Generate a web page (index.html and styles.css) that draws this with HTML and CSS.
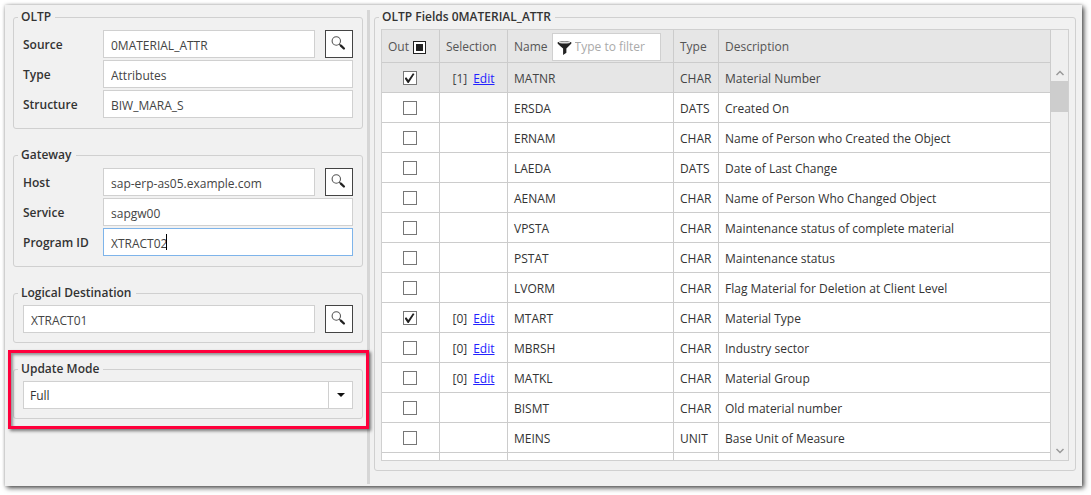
FILE: index.html
```
<!DOCTYPE html>
<html lang="en">
<head>
<meta charset="utf-8">
<title>OLTP Extraction</title>
<link rel="stylesheet" href="styles.css">
</head>
<body>
<svg class="sprite" aria-hidden="true">
  <symbol id="search" viewBox="0 0 16 16">
    <circle cx="5.3" cy="5" r="4.2" fill="none" stroke="#555" stroke-width="1.1"/>
    <path d="M8.300 8.100l2 2" stroke="#444" stroke-width="1.3"/>
    <path d="M9.900 9.600l3 2.900" stroke="#222" stroke-width="2.3" stroke-linecap="round"/>
  </symbol>
</svg>
<main class="window">
  <form class="settings">
    <fieldset class="group">
      <legend>OLTP</legend>
      <div class="field">
        <label for="source">Source</label>
        <input class="text" id="source" type="text" value="0MATERIAL_ATTR">
        <button class="lookup" type="button" aria-label="Find source"><svg><use href="#search"/></svg></button>
      </div>
      <div class="field">
        <label for="type">Type</label>
        <input class="text" id="type" type="text" value="Attributes">
      </div>
      <div class="field">
        <label for="structure">Structure</label>
        <input class="text" id="structure" type="text" value="BIW_MARA_S">
      </div>
    </fieldset>
    <fieldset class="group">
      <legend>Gateway</legend>
      <div class="field">
        <label for="host">Host</label>
        <input class="text" id="host" type="text" value="sap-erp-as05.example.com">
        <button class="lookup" type="button" aria-label="Find host"><svg><use href="#search"/></svg></button>
      </div>
      <div class="field">
        <label for="service">Service</label>
        <input class="text" id="service" type="text" value="sapgw00">
      </div>
      <div class="field">
        <label for="program">Program ID</label>
        <span class="editing">
          <input class="text active" id="program" type="text" value="XTRACT02">
          <span class="caret"></span>
        </span>
      </div>
    </fieldset>
    <fieldset class="group compact">
      <legend>Logical Destination</legend>
      <div class="field">
        <input class="text" type="text" value="XTRACT01" aria-label="Logical Destination">
        <button class="lookup" type="button" aria-label="Find destination"><svg><use href="#search"/></svg></button>
      </div>
    </fieldset>
    <div class="highlighted">
      <fieldset class="group compact">
        <legend>Update Mode</legend>
        <div class="dropdown">
          <select aria-label="Update Mode"><option>Full</option></select>
          <span class="arrow"></span>
        </div>
      </fieldset>
      <div class="highlight"></div>
    </div>
  </form>
  <div class="splitter"></div>
  <fieldset class="group fields">
    <legend>OLTP Fields 0MATERIAL_ATTR</legend>
    <div class="grid">
      <div class="viewport">
        <table>
          <colgroup><col class="c-out"><col class="c-sel"><col class="c-name"><col class="c-type"><col></colgroup>
          <thead>
            <tr>
              <th scope="col"><label class="head">Out <input class="mixed" type="checkbox"></label></th>
              <th scope="col">Selection</th>
              <th scope="col"><div class="head">Name
                <span class="filter">
                  <svg viewBox="0 0 16 16"><path d="M.5 3C.5.6 15.500.6 15.500 3c0 1-1.300 2-2.500 3L10 9v4.500L6.500 16V9L3 6C1.800 5 .5 4 .5 3z" fill="#222"/><ellipse cx="8" cy="2.700" rx="6" ry="1" fill="#ddd"/></svg>
                  <input type="text" placeholder="Type to filter" aria-label="Filter by name">
                </span></div></th>
              <th scope="col">Type</th>
              <th scope="col">Description</th>
            </tr>
          </thead>
          <tbody>
            <tr class="selected"><td class="out"><input type="checkbox" aria-label="MATNR" checked></td><td><div class="pick">[1] <a href="#">Edit</a></div></td><td>MATNR</td><td>CHAR</td><td>Material Number</td></tr>
            <tr><td class="out"><input type="checkbox" aria-label="ERSDA"></td><td></td><td>ERSDA</td><td>DATS</td><td>Created On</td></tr>
            <tr><td class="out"><input type="checkbox" aria-label="ERNAM"></td><td></td><td>ERNAM</td><td>CHAR</td><td>Name of Person who Created the Object</td></tr>
            <tr><td class="out"><input type="checkbox" aria-label="LAEDA"></td><td></td><td>LAEDA</td><td>DATS</td><td>Date of Last Change</td></tr>
            <tr><td class="out"><input type="checkbox" aria-label="AENAM"></td><td></td><td>AENAM</td><td>CHAR</td><td>Name of Person Who Changed Object</td></tr>
            <tr><td class="out"><input type="checkbox" aria-label="VPSTA"></td><td></td><td>VPSTA</td><td>CHAR</td><td>Maintenance status of complete material</td></tr>
            <tr><td class="out"><input type="checkbox" aria-label="PSTAT"></td><td></td><td>PSTAT</td><td>CHAR</td><td>Maintenance status</td></tr>
            <tr><td class="out"><input type="checkbox" aria-label="LVORM"></td><td></td><td>LVORM</td><td>CHAR</td><td>Flag Material for Deletion at Client Level</td></tr>
            <tr><td class="out"><input type="checkbox" aria-label="MTART" checked></td><td><div class="pick">[0] <a href="#">Edit</a></div></td><td>MTART</td><td>CHAR</td><td>Material Type</td></tr>
            <tr><td class="out"><input type="checkbox" aria-label="MBRSH"></td><td><div class="pick">[0] <a href="#">Edit</a></div></td><td>MBRSH</td><td>CHAR</td><td>Industry sector</td></tr>
            <tr><td class="out"><input type="checkbox" aria-label="MATKL"></td><td><div class="pick">[0] <a href="#">Edit</a></div></td><td>MATKL</td><td>CHAR</td><td>Material Group</td></tr>
            <tr><td class="out"><input type="checkbox" aria-label="BISMT"></td><td></td><td>BISMT</td><td>CHAR</td><td>Old material number</td></tr>
            <tr><td class="out"><input type="checkbox" aria-label="MEINS"></td><td></td><td>MEINS</td><td>UNIT</td><td>Base Unit of Measure</td></tr>
            <tr><td></td><td></td><td></td><td></td><td></td></tr>
          </tbody>
        </table>
      </div>
      <div class="scrollbar">
        <svg viewBox="0 0 10 6"><path d="M1.500 5L5 1.500 8.500 5"/></svg>
        <div class="thumb"></div>
        <svg class="down" viewBox="0 0 10 6"><path d="M1.500 1L5 4.500 8.500 1"/></svg>
      </div>
    </div>
  </fieldset>
</main>
</body>
</html>
```
FILE: styles.css
```
* { box-sizing: border-box; }

body {
  margin: 0;
  height: 100vh;
  padding: 5px 9px 9px 5px;
  background: #fff;
  color: #333;
  font: 12px/16px "Open Sans", "Noto Sans", sans-serif;
}

input, select, button { font: inherit; color: inherit; margin: 0; }

.sprite { position: absolute; width: 0; height: 0; }

.window {
  display: flex;
  height: 100%;
  padding: 4px 6px 2px 8px;
  background: #f1f1f1;
  box-shadow: 2px 2px 5px rgba(0, 0, 0, .7), 0 0 3px rgba(0, 0, 0, .2);
}

.settings {
  display: flex;
  flex: 0 0 350px;
  flex-direction: column;
  gap: 18px;
}

.group {
  min-width: 0;
  margin: 0;
  padding: 5px 9px 10px;
  border: 1px solid #d0d0d0;
  border-radius: 3px;
}

.compact { padding: 4px 9px 9px; }

legend {
  height: 16px;
  margin-left: -5px;
  padding: 0 4px 0 3px;
  font-weight: 600;
}

.field {
  display: flex;
  align-items: center;
  height: 28px;
}

.field + .field { margin-top: 2px; }

.field label { flex: 0 0 80px; padding-top: 2px; font-weight: 600; }

.text {
  flex: 1;
  width: 100%;
  min-width: 0;
  height: 28px;
  padding: 2px 7px 0;
  border: 1px solid #d0d0d0;
  background: #fff;
  color: #444;
  outline: none;
}

.active { border-color: #7eb4ea; }

.editing { position: relative; display: flex; flex: 1; }

.caret {
  position: absolute;
  top: 6px;
  left: 63px;
  width: 1px;
  height: 16px;
  background: #000;
}

.lookup {
  display: grid;
  place-items: center;
  width: 28px;
  height: 28px;
  margin-left: 10px;
  padding: 0;
  border: 1px solid #444;
  background: #fff;
}

.lookup svg { width: 16px; height: 16px; }

.highlighted { position: relative; }

.highlight {
  position: absolute;
  inset: -11px -6px -10px -5px;
  z-index: 1;
  border: 3px solid #ff003c;
  box-shadow: 2px 2px 3px rgba(0, 0, 0, .5), inset 2px 2px 3px rgba(0, 0, 0, .4);
  pointer-events: none;
}

.dropdown { display: grid; }

.dropdown select {
  grid-area: 1 / 1;
  height: 28px;
  padding: 2px 6px 0;
  border: 1px solid #d0d0d0;
  border-radius: 0;
  background: #fff;
  appearance: none;
}

.arrow {
  grid-area: 1 / 1;
  display: grid;
  place-items: center;
  justify-self: end;
  width: 25px;
  border-left: 1px solid #d0d0d0;
  pointer-events: none;
}

.arrow::before {
  content: "";
  border: 4px solid transparent;
  border-top-color: #111;
  border-bottom: 0;
}

.splitter { flex: 0 0 3px; margin: 1px 4px 0; background: #d6d6d6; }

.fields {
  flex: 1;
  margin-bottom: 13px;
  padding: 4px 6px 9px;
}

.fields legend { margin-left: -2px; }

.grid {
  display: flex;
  height: 100%;
  border: 1px solid #d0d0d0;
  background: #fff;
}

.viewport { flex: 1; min-width: 0; overflow: hidden; }

table {
  width: 100%;
  border-spacing: 0;
  table-layout: fixed;
}

.c-out { width: 58px; }
.c-sel { width: 68px; }
.c-name { width: 166px; }
.c-type { width: 45px; }

th, td {
  height: 30px;
  padding: 2px 6px 0;
  border-right: 1px solid #ccc;
  border-bottom: 1px solid #ccc;
  text-align: left;
  white-space: nowrap;
}

th {
  height: 33px;
  background: #e6e6e6;
  color: #555;
  font-weight: 400;
}

.selected td { background: #e6e6e6; color: #444; }

td.out { padding: 0 8px 0 6px; text-align: center; }

.head { display: flex; align-items: center; gap: 4px; }

.pick { display: flex; justify-content: center; gap: 6px; }

a { color: #22f; }

input[type="checkbox"] {
  display: inline-grid;
  place-items: center;
  width: 14px;
  height: 14px;
  border: 1px solid #777;
  background: #fff;
  appearance: none;
  vertical-align: middle;
}

input[type="checkbox"]:checked::before {
  content: "";
  width: 10px;
  height: 10px;
  background: #222;
  clip-path: polygon(0 50%, 18% 40%, 38% 66%, 84% 0, 100% 8%, 42% 98%, 32% 98%);
}

input.mixed { width: 13px; height: 13px; border-color: #222; }

.mixed::before {
  content: "";
  width: 7px;
  height: 7px;
  background: #222;
}

.filter {
  display: flex;
  align-items: center;
  gap: 3px;
  width: 109px;
  height: 28px;
  padding: 0 4px;
  border: 1px solid #d0d0d0;
  background: #fff;
}

.filter svg { flex: 0 0 15px; height: 15px; }

.filter input {
  flex: 1;
  min-width: 0;
  padding: 0;
  border: 0;
  background: none;
  outline: none;
}

.filter input::placeholder { color: #aaa; }

.scrollbar {
  display: flex;
  flex: 0 0 17px;
  flex-direction: column;
  align-items: center;
  padding: 40px 0 6px;
  background: #efefef;
}

.scrollbar svg {
  flex: none;
  width: 10px;
  height: 6px;
  fill: none;
  stroke: #999;
  stroke-width: 1.5;
}

.scrollbar .down { margin-top: auto; }

.thumb {
  width: 100%;
  height: 31px;
  margin-top: 5px;
  background: #cdcdcd;
}
```
